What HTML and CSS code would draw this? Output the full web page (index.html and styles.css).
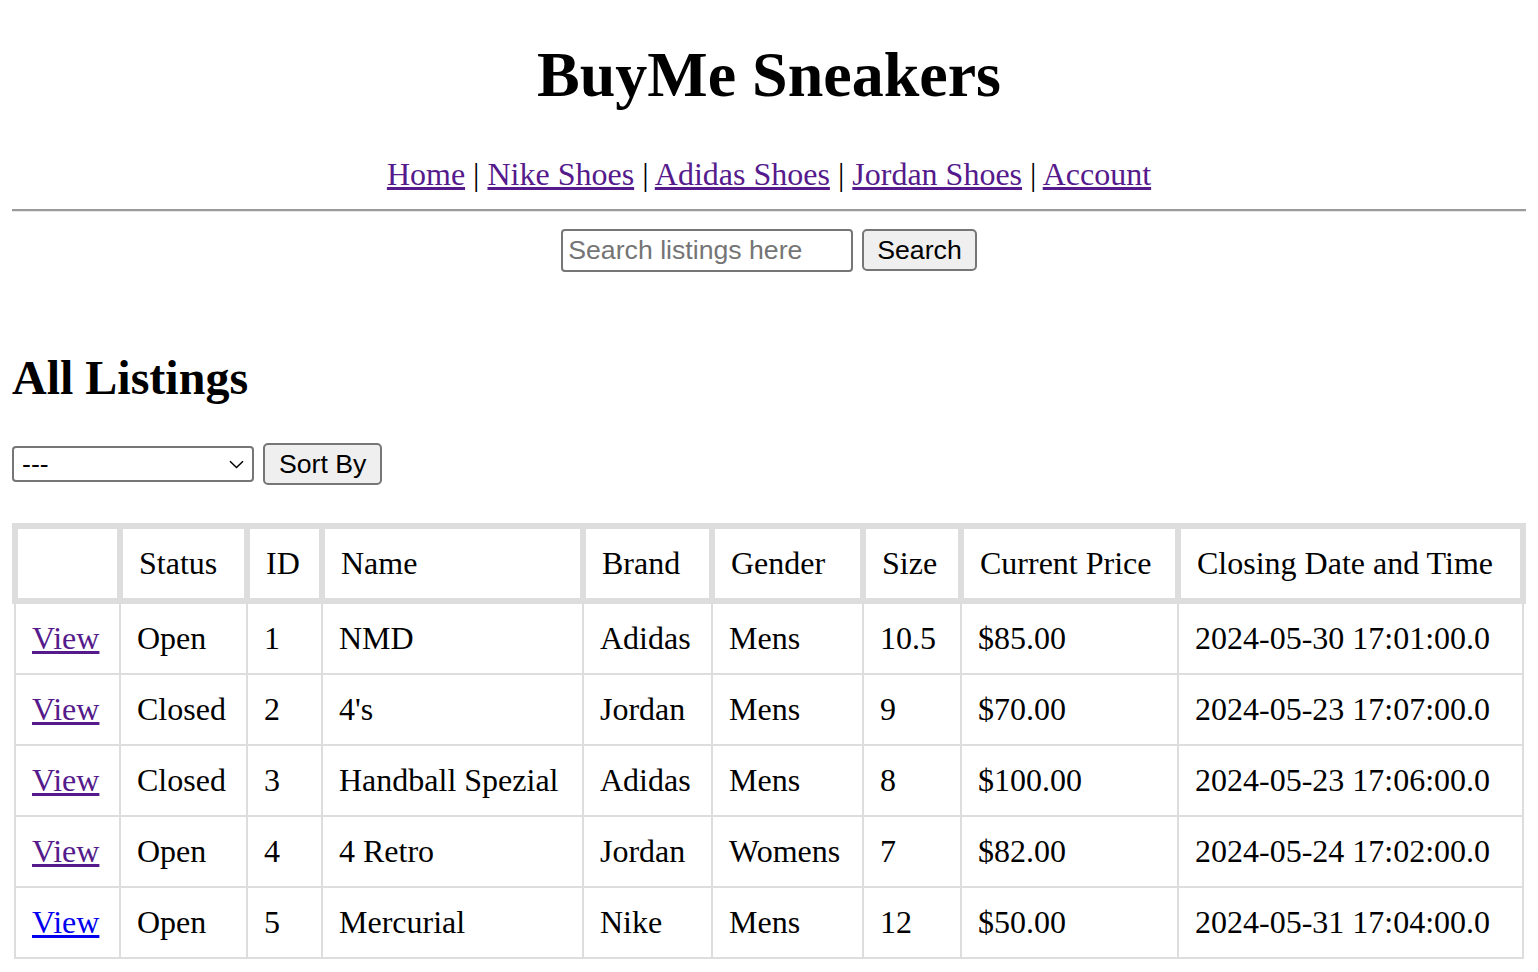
FILE: index.html
```html
<!DOCTYPE html>
<html lang="en">
<head>
<meta charset="utf-8">
<title>BuyMe Sneakers</title>
<link rel="stylesheet" href="styles.css">
</head>
<body>
<h1 class="title">BuyMe Sneakers</h1>
<div class="nav"><a class="visited" href="#">Home</a> | <a class="visited" href="#">Nike Shoes</a> | <a class="visited" href="#">Adidas Shoes</a> | <a class="visited" href="#">Jordan Shoes</a> | <a class="visited" href="#">Account</a></div>
<hr class="rule">
<form class="search">
  <input class="search-input" type="text" placeholder="Search listings here">
  <button class="btn" type="button">Search</button>
</form>
<h2 class="section-title">All Listings</h2>
<form class="sort">
  <div class="select-wrap">
    <select class="sort-select"><option>---</option></select>
    <svg class="chev" width="15" height="9" viewBox="0 0 15 9"><path d="M1 1.2 L7.5 7.5 L14 1.2" fill="none" stroke="#000" stroke-width="1.5"/></svg>
  </div>
  <button class="btn btn-sort" type="button">Sort By</button>
</form>
<table class="listings">
  <colgroup>
    <col class="c1"><col class="c2"><col class="c3"><col class="c4"><col class="c5"><col class="c6"><col class="c7"><col class="c8"><col class="c9">
  </colgroup>
  <thead>
    <tr><th></th><th>Status</th><th>ID</th><th>Name</th><th>Brand</th><th>Gender</th><th>Size</th><th>Current Price</th><th>Closing Date and Time</th></tr>
  </thead>
  <tbody>
    <tr><td><a class="visited" href="#">View</a></td><td>Open</td><td>1</td><td>NMD</td><td>Adidas</td><td>Mens</td><td>10.5</td><td>$85.00</td><td>2024-05-30 17:01:00.0</td></tr>
    <tr><td><a class="visited" href="#">View</a></td><td>Closed</td><td>2</td><td>4's</td><td>Jordan</td><td>Mens</td><td>9</td><td>$70.00</td><td>2024-05-23 17:07:00.0</td></tr>
    <tr><td><a class="visited" href="#">View</a></td><td>Closed</td><td>3</td><td>Handball Spezial</td><td>Adidas</td><td>Mens</td><td>8</td><td>$100.00</td><td>2024-05-23 17:06:00.0</td></tr>
    <tr><td><a class="visited" href="#">View</a></td><td>Open</td><td>4</td><td>4 Retro</td><td>Jordan</td><td>Womens</td><td>7</td><td>$82.00</td><td>2024-05-24 17:02:00.0</td></tr>
    <tr><td><a class="fresh" href="#">View</a></td><td>Open</td><td>5</td><td>Mercurial</td><td>Nike</td><td>Mens</td><td>12</td><td>$50.00</td><td>2024-05-31 17:04:00.0</td></tr>
  </tbody>
</table>
</body>
</html>
```
FILE: styles.css
```css
html, body {
  background: #fff;
}
body {
  margin: 0 12px;
  font-family: "Liberation Serif", "Times New Roman", serif;
  font-size: 32px;
  color: #000;
}
a.visited { color: #551a8b; }
a.fresh { color: #0000ee; }

.title {
  margin: 38px 0 0;
  font-size: 64px;
  line-height: 74px;
  font-weight: bold;
  text-align: center;
}
.nav {
  margin-top: 44px;
  line-height: 37px;
  text-align: center;
}
.rule {
  margin: 16px -2px 0 0;
  height: 0;
  border: 0;
  border-top: 2px solid #9a9a9a;
  border-bottom: 1px solid #e8e8e8;
}
.search {
  display: flex;
  justify-content: center;
  align-items: flex-start;
  gap: 9px;
  margin: 17px 0 0;
}
.search-input {
  box-sizing: border-box;
  width: 292px;
  height: 43px;
  margin: 0;
  padding: 0 5px;
  border: 2px solid #767676;
  border-radius: 4px;
  font-family: "Liberation Sans", Arial, sans-serif;
  font-size: 26.67px;
  color: #000;
  background: #fff;
}
.search-input::placeholder { color: #757575; }
.btn {
  box-sizing: border-box;
  height: 42px;
  margin: 0;
  padding: 0 13px;
  border: 2px solid #767676;
  border-radius: 5px;
  background: #efefef;
  font-family: "Liberation Sans", Arial, sans-serif;
  font-size: 26.67px;
  color: #000;
}
.btn-sort {
  padding: 0 14px;
}
.section-title {
  margin: 78px 0 0;
  font-size: 48px;
  line-height: 55px;
  font-weight: bold;
}
.sort {
  display: flex;
  align-items: center;
  gap: 9px;
  margin: 38px 0 0;
}
.select-wrap {
  position: relative;
  display: flex;
}
.sort-select {
  appearance: none;
  -webkit-appearance: none;
  box-sizing: border-box;
  width: 242px;
  height: 36px;
  margin: 0;
  padding: 0 8px;
  border: 2px solid #767676;
  border-radius: 4px;
  background: #fff;
  font-family: "Liberation Sans", Arial, sans-serif;
  font-size: 26.67px;
  color: #000;
}
.chev {
  position: absolute;
  right: 10px;
  top: 14px;
  pointer-events: none;
}
.listings {
  margin-top: 38px;
  width: 1514px;
  border-collapse: collapse;
  table-layout: fixed;
}
.c1 { width: 105px; }
.c2 { width: 127px; }
.c3 { width: 75px; }
.c4 { width: 261px; }
.c5 { width: 129px; }
.c6 { width: 151px; }
.c7 { width: 98px; }
.c8 { width: 217px; }
.c9 { width: 345px; }
.listings th {
  border: 6px solid #ddd;
  padding: 16px;
  font-weight: normal;
  text-align: left;
  line-height: 37px;
  white-space: nowrap;
}
.listings td {
  border: 2px solid #ddd;
  padding: 16px;
  line-height: 37px;
  white-space: nowrap;
}
```
